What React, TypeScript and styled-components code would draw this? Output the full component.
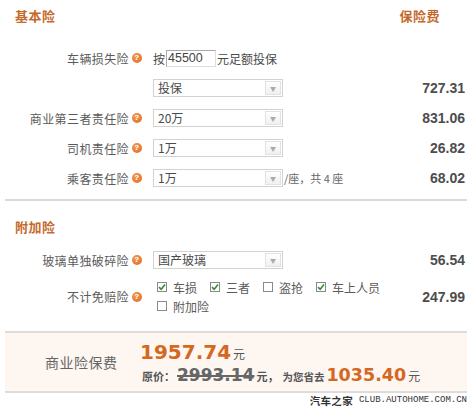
import React from "react";
import styled, { createGlobalStyle } from "styled-components";

const Global = createGlobalStyle`
  html, body { margin: 0; padding: 0; background: #fff; }
  body { font-family: "Noto Sans CJK SC", "Liberation Sans", sans-serif; }
`;

const Page = styled.div`
  width: 474px;
  height: 408px;
  box-sizing: border-box;
  padding: 0 7px 0 5px;
  overflow: hidden;
`;

const SectionHeader = styled.div<{ $h: number; $pt: number }>`
  height: ${(p) => p.$h}px;
  box-sizing: border-box;
  padding: ${(p) => p.$pt}px 27px 0 10px;
  display: flex;
  justify-content: space-between;
  align-items: flex-start;
  font-size: 13px;
  line-height: 14px;
  font-weight: bold;
  color: #c4692a;
  letter-spacing: 0.5px;
`;

const Row = styled.div<{ $h: number }>`
  height: ${(p) => p.$h}px;
  display: grid;
  grid-template-columns: 137px 1fr auto;
  column-gap: 11px;
  align-items: center;
  padding-right: 2px;
`;

const LabelCell = styled.div`
  display: flex;
  justify-content: flex-end;
  align-items: center;
  gap: 3px;
  font-size: 12px;
  letter-spacing: 0.4px;
  color: #5a5a5a;
  white-space: nowrap;
`;

const Help = styled.span`
  width: 10px;
  height: 10px;
  border-radius: 50%;
  background: radial-gradient(circle at 40% 35%, #f39a55, #e0661f);
  color: #fff;
  font: bold 8px/10px "Liberation Sans", sans-serif;
  text-align: center;
`;

const Control = styled.div`
  display: flex;
  align-items: center;
  font-size: 12px;
  color: #4a4a4a;
  white-space: nowrap;
`;

const Input = styled.div`
  width: 50px;
  height: 17px;
  box-sizing: border-box;
  border: 1px solid #a8a8a8;
  border-right-color: #ddd;
  border-bottom-color: #ddd;
  margin: 0 1px 0 1px;
  padding-left: 1px;
  font: 12.5px/15px "Liberation Sans", sans-serif;
  color: #444;
`;

const Select = styled.div`
  width: 130px;
  height: 18px;
  box-sizing: border-box;
  border: 1px solid #d2d2d2;
  display: flex;
  align-items: stretch;
  background: #fff;
`;

const SelectText = styled.span`
  flex: 1;
  padding-left: 4px;
  font-size: 12px;
  line-height: 16px;
  color: #4a4a4a;
`;

const Arrow = styled.span`
  width: 16px;
  margin: 1px;
  box-sizing: border-box;
  border: 1px solid #e2e2e2;
  background: linear-gradient(#fff, #f0f0f0);
  display: flex;
  align-items: center;
  justify-content: center;
  color: #aaa;
  font-size: 6px;
`;

const Note = styled.span`
  font-size: 11px;
  color: #666;
  margin-left: 1px;
`;

const Value = styled.div`
  font: bold 14px/16px "Liberation Sans", Arial, sans-serif;
  color: #4d4d4d;
  text-align: right;
`;

const Divider = styled.div`
  border-top: 2px solid #dadada;
  margin-top: 6px;
`;

const Checks = styled.div`
  display: flex;
  flex-direction: column;
  padding-left: 4px;
`;

const CheckLine = styled.div`
  display: flex;
  gap: 13px;
  height: 19px;
  align-items: center;
`;

const CheckItem = styled.label`
  display: flex;
  align-items: center;
  gap: 6px;
  font-size: 12px;
  color: #5a5a5a;
`;

const Box = styled.span`
  width: 10px;
  height: 10px;
  box-sizing: border-box;
  border: 1px solid #8a8a8a;
  background: #fff;
  display: flex;
  align-items: center;
  justify-content: center;
`;

const Summary = styled.div`
  margin-top: 13px;
  height: 62px;
  box-sizing: border-box;
  background: #fdf6f1;
  border-top: 2px solid #dcdcdc;
  border-bottom: 2px solid #dcdcdc;
  display: grid;
  grid-template-columns: 135px 1fr;
  align-items: center;
`;

const SumLabel = styled.div`
  padding-left: 40px;
  font-size: 14px;
  color: #666;
  letter-spacing: 0.5px;
`;

const SumBlock = styled.div`
  display: flex;
  flex-direction: column;
  padding-top: 2px;
`;

const SumLine = styled.div<{ $lh: number }>`
  display: flex;
  align-items: baseline;
  line-height: ${(p) => p.$lh}px;
  white-space: nowrap;
`;

const Big = styled.span<{ $size: number }>`
  font-family: "DejaVu Sans", Verdana, sans-serif;
  font-weight: bold;
  font-size: ${(p) => p.$size}px;
  color: #d4681f;
`;

const Struck = styled.span`
  font-family: "DejaVu Sans", Verdana, sans-serif;
  font-weight: bold;
  font-size: 17px;
  color: #666;
  text-decoration: line-through;
  text-decoration-thickness: 2px;
`;

const Small = styled.span<{ $bold?: boolean; $size?: number }>`
  font-size: ${(p) => p.$size ?? 12}px;
  font-weight: ${(p) => (p.$bold ? "bold" : "normal")};
  color: #555;
  margin: 0 2px;
`;

const Watermark = styled.div`
  display: flex;
  justify-content: flex-end;
  align-items: center;
  gap: 6px;
  height: 14px;
  color: #333;
`;

const WmCn = styled.span`
  font-size: 10.5px;
  font-weight: bold;
  letter-spacing: 0.3px;
`;

const WmEn = styled.span`
  font: 9px "Liberation Mono", monospace;
`;

function Check({ checked }: { checked?: boolean }) {
  return (
    <Box>
      {checked && (
        <svg width="8" height="8" viewBox="0 0 8 8">
          <path d="M1 4.2 L3.2 6.3 L7 1.6" fill="none" stroke="#2f8f2f" strokeWidth="1.6" />
        </svg>
      )}
    </Box>
  );
}

function Sel({ text }: { text: string }) {
  return (
    <Select>
      <SelectText>{text}</SelectText>
      <Arrow>▼</Arrow>
    </Select>
  );
}

function Label({ text }: { text: string }) {
  return (
    <LabelCell>
      {text}
      <Help>?</Help>
    </LabelCell>
  );
}

export default function App() {
  return (
    <Page>
      <Global />
      <SectionHeader $h={43} $pt={9}>
        <span>基本险</span>
        <span>保险费</span>
      </SectionHeader>

      <Row $h={30}>
        <Label text="车辆损失险" />
        <Control>
          按<Input>45500</Input>元足额投保
        </Control>
        <Value></Value>
      </Row>
      <Row $h={30}>
        <span />
        <Control>
          <Sel text="投保" />
        </Control>
        <Value>727.31</Value>
      </Row>
      <Row $h={30}>
        <Label text="商业第三者责任险" />
        <Control>
          <Sel text="20万" />
        </Control>
        <Value>831.06</Value>
      </Row>
      <Row $h={30}>
        <Label text="司机责任险" />
        <Control>
          <Sel text="1万" />
        </Control>
        <Value>26.82</Value>
      </Row>
      <Row $h={30}>
        <Label text="乘客责任险" />
        <Control>
          <Sel text="1万" />
          <Note>/座，共 4 座</Note>
        </Control>
        <Value>68.02</Value>
      </Row>

      <Divider />

      <SectionHeader $h={44} $pt={19}>
        <span>附加险</span>
      </SectionHeader>

      <Row $h={30}>
        <Label text="玻璃单独破碎险" />
        <Control>
          <Sel text="国产玻璃" />
        </Control>
        <Value>56.54</Value>
      </Row>
      <Row $h={43}>
        <Label text="不计免赔险" />
        <Checks>
          <CheckLine>
            <CheckItem>
              <Check checked />
              车损
            </CheckItem>
            <CheckItem>
              <Check checked />
              三者
            </CheckItem>
            <CheckItem>
              <Check />
              盗抢
            </CheckItem>
            <CheckItem>
              <Check checked />
              车上人员
            </CheckItem>
          </CheckLine>
          <CheckLine>
            <CheckItem>
              <Check />
              附加险
            </CheckItem>
          </CheckLine>
        </Checks>
        <Value>247.99</Value>
      </Row>

      <Summary>
        <SumLabel>商业险保费</SumLabel>
        <SumBlock>
          <SumLine $lh={24}>
            <Big $size={20}>1957.74</Big>
            <Small>元</Small>
          </SumLine>
          <SumLine $lh={18}>
            <Small $bold $size={11}>原价：</Small>
            <Struck>2993.14</Struck>
            <Small $bold $size={11}>元，</Small>
            <Small $bold $size={10.5}>为您省去</Small>
            <Big $size={17.5}>1035.40</Big>
            <Small>元</Small>
          </SumLine>
        </SumBlock>
      </Summary>

      <Watermark>
        <WmCn>汽车之家</WmCn>
        <WmEn>CLUB.AUTOHOME.COM.CN</WmEn>
      </Watermark>
    </Page>
  );
}
